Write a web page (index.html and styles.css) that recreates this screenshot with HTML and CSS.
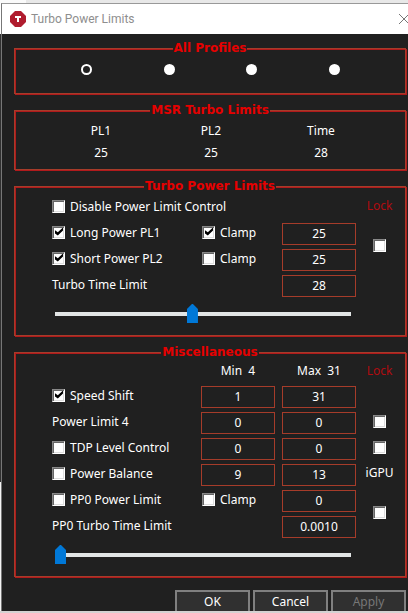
FILE: index.html
```html
<!DOCTYPE html>
<html lang="en">
<head>
<meta charset="utf-8">
<title>Turbo Power Limits</title>
<link rel="stylesheet" href="styles.css">
</head>
<body>
<main class="window">
  <header class="titlebar">
    <svg class="logo" viewBox="0 0 16 16" aria-hidden="true">
      <path d="M5 0h6l5 5v6l-5 5H5l-5-5V5z" fill="#b01c2e"/>
      <path d="M5 5h6v2H9v4H7V7H5z" fill="#fff"/>
    </svg>
    <h1 class="title">Turbo Power Limits</h1>
    <button class="close" type="button" aria-label="Close">
      <svg viewBox="0 0 10 10" width="10" height="10"><path d="M0 0l10 10M10 0L0 10" stroke="#777" fill="none"/></svg>
    </button>
  </header>
  <form class="content">
    <fieldset class="group">
      <legend>All Profiles</legend>
      <div class="profiles">
        <input type="radio" name="profile" aria-label="Profile 1" checked>
        <input type="radio" name="profile" aria-label="Profile 2">
        <input type="radio" name="profile" aria-label="Profile 3">
        <input type="radio" name="profile" aria-label="Profile 4">
      </div>
    </fieldset>

    <fieldset class="group">
      <legend>MSR Turbo Limits</legend>
      <table class="limits">
        <tr><th>PL1</th><th>PL2</th><th>Time</th></tr>
        <tr><td>25</td><td>25</td><td>28</td></tr>
      </table>
    </fieldset>

    <fieldset class="group">
      <legend>Turbo Power Limits</legend>
      <div class="grid">
        <label class="check wide"><input type="checkbox">Disable Power Limit Control</label>
        <span class="lock">Lock</span>
        <label class="check"><input type="checkbox" checked>Long Power PL1</label>
        <label class="check"><input type="checkbox" checked>Clamp</label>
        <input class="field" type="text" value="25" aria-label="Long Power PL1">
        <input class="lock-box tall" type="checkbox" aria-label="Lock turbo power limits">
        <label class="check"><input type="checkbox" checked>Short Power PL2</label>
        <label class="check"><input type="checkbox">Clamp</label>
        <input class="field" type="text" value="25" aria-label="Short Power PL2">
        <label class="text wide-2" for="time">Turbo Time Limit</label>
        <input class="field" id="time" type="text" value="28">
      </div>
      <input class="slider" type="range" min="0" max="1000" value="463" aria-label="Turbo Time Limit">
    </fieldset>

    <fieldset class="group">
      <legend>Miscellaneous</legend>
      <div class="grid with-head">
        <span class="head min">Min&nbsp; 4</span>
        <span class="head">Max&nbsp; 31</span>
        <span class="lock">Lock</span>
        <label class="check"><input type="checkbox" checked>Speed Shift</label>
        <input class="field" type="text" value="1" aria-label="Speed Shift minimum">
        <input class="field" type="text" value="31" aria-label="Speed Shift maximum">
        <span></span>
        <span class="text">Power Limit 4</span>
        <input class="field" type="text" value="0" aria-label="Power Limit 4 minimum">
        <input class="field" type="text" value="0" aria-label="Power Limit 4 maximum">
        <input class="lock-box" type="checkbox" aria-label="Lock Power Limit 4">
        <label class="check"><input type="checkbox">TDP Level Control</label>
        <input class="field" type="text" value="0" aria-label="TDP level minimum">
        <input class="field" type="text" value="0" aria-label="TDP level maximum">
        <input class="lock-box" type="checkbox" aria-label="Lock TDP Level Control">
        <label class="check"><input type="checkbox">Power Balance</label>
        <input class="field" type="text" value="9" aria-label="Power Balance CPU">
        <input class="field" type="text" value="13" aria-label="Power Balance iGPU">
        <span class="head">iGPU</span>
        <label class="check"><input type="checkbox">PP0 Power Limit</label>
        <label class="check"><input type="checkbox">Clamp</label>
        <input class="field" type="text" value="0" aria-label="PP0 Power Limit">
        <input class="lock-box tall" type="checkbox" aria-label="Lock PP0 power limit">
        <label class="text wide-2" for="pp0-time">PP0 Turbo Time Limit</label>
        <input class="field" id="pp0-time" type="text" value="0.0010">
      </div>
      <input class="slider" type="range" min="0" max="1000" value="0" aria-label="PP0 Turbo Time Limit">
    </fieldset>

    <footer class="actions">
      <button type="button">OK</button>
      <button type="button">Cancel</button>
      <button type="button" disabled>Apply</button>
    </footer>
  </form>
</main>
</body>
</html>
```
FILE: styles.css
```css
* { box-sizing: border-box; }

body {
  margin: 0;
  padding: 3px 0 0 1px;
  min-height: 100vh;
  overflow: hidden;
  font: 12px/16px "Noto Sans", "Open Sans", sans-serif;
  color: #fff;
  background:
    linear-gradient(90deg, #fafafa 26px, #e8e8e8 26px) top / 100% 3px no-repeat,
    linear-gradient(#fff 34px, #303030 34px, #303030 482px, #f4f4f4 482px, #f4f4f4 611px, #d4d2d2 611px);
}

.window {
  border-top: 1px solid #999;
  border-left: 1px solid #777;
  background: #202020;
}

.titlebar {
  display: flex;
  align-items: center;
  height: 30px;
  padding-left: 8px;
  background: #fff;
  overflow: hidden;
}
.logo { width: 16px; height: 16px; }
.title {
  flex: 1;
  margin: 0 0 0 5px;
  font-family: Roboto, sans-serif;
  font-size: 12px;
  font-weight: 400;
  color: #8e8e8e;
}
.close {
  flex: none;
  display: flex;
  width: 10px;
  margin-right: -1px;
  padding: 0;
  border: 0;
  background: none;
}

.content {
  display: flex;
  flex-direction: column;
  gap: 9px;
  padding: 7px 2px 0 12px;
}

.group {
  min-width: 0;
  margin: 0;
  padding: 0;
  border: 1px solid #a63c2a;
  box-shadow: 1px 1px 0 #b01a1c, inset 1px 1px 0 #b01a1c;
}
.group legend {
  height: 14px;
  margin: 0 auto;
  padding: 0 1px;
  font: bold 12px/14px "DejaVu Sans", sans-serif;
  color: #e60000;
  background: #202020;
}

.profiles {
  display: grid;
  grid-template-columns: repeat(4, 1fr);
  justify-items: center;
  padding: 9px 29px 18px 30px;
}
.profiles input {
  appearance: none;
  width: 11px;
  height: 11px;
  margin: 0;
  border-radius: 50%;
  background: #fff;
}
.profiles input:checked { border: 2px solid #fff; background: #202020; }

.limits {
  width: calc(100% - 60px);
  margin: 3px 29px 5px 31px;
  table-layout: fixed;
  border-collapse: collapse;
  text-align: center;
}
.limits th, .limits td { height: 22px; padding: 0; font-weight: 400; }

.grid {
  display: grid;
  grid-template-columns: 1fr 74px 7px 74px 47px;
  grid-auto-rows: 26px;
  align-items: center;
  padding: 0 2px 0 37px;
}
.with-head { grid-template-rows: 23px; }
.check { grid-column: 1; display: flex; align-items: center; gap: 5px; white-space: nowrap; }
.check, .text { padding-top: 2px; }
.check + .check { grid-column: 2; padding-left: 1px; }
.wide { grid-column: 1 / 5; }
.text { grid-column: 1; }
.wide-2 { grid-column: 1 / 3; }
.head { text-align: center; white-space: nowrap; }
.min { grid-column: 2; }
.min + .head { grid-column: 4; }
.lock { grid-column: 5; text-align: center; color: #b00c10; }

.field {
  grid-column: 4;
  align-self: end;
  width: 100%;
  height: 22px;
  padding: 0 0 2px;
  border: 1px solid #a63c2a;
  background: #202020;
  color: #fff;
  font: inherit;
  text-align: center;
}
.field:has(+ .field) { grid-column: 2; }

.grid input[type="checkbox"] {
  appearance: none;
  flex: none;
  width: 13px;
  height: 13px;
  margin: 0;
  border: 1px solid;
  border-color: #888 #fff #fff #888;
  box-shadow: inset 1px 1px 0 #666, inset -1px -1px 0 #ddd;
  background: #fff;
}
.grid .check input[type="checkbox"] { margin-bottom: 2px; }
.grid input[type="checkbox"]:checked::before {
  content: "";
  display: block;
  width: 8px;
  height: 8px;
  margin: 1px 0 0 2px;
  background: #000;
  clip-path: polygon(0 35%, 35% 58%, 100% 0, 100% 38%, 35% 100%, 0 75%);
}
.grid .lock-box { grid-column: 5; justify-self: center; }
.grid .tall { grid-row: span 2; }

.slider {
  appearance: none;
  display: block;
  width: calc(100% - 94px);
  height: 19px;
  margin: 7px 54px 12px 40px;
  background: linear-gradient(#e2e5e5, #e2e5e5) center / 100% 4px no-repeat;
}
.slider::-webkit-slider-thumb {
  appearance: none;
  width: 11px;
  height: 19px;
  background: #0078d7;
  clip-path: polygon(0 5px, 5px 0, 6px 0, 100% 5px, 100% 100%, 0 100%);
}

.actions {
  display: flex;
  justify-content: flex-end;
  gap: 3px;
  height: 21px;
  margin-top: 4px;
  overflow: hidden;
}
.actions button {
  width: 75px;
  height: 24px;
  padding: 0;
  border: 2px solid #808080;
  background: #303030;
  color: #fff;
  font: inherit;
}
.actions button:disabled { color: #777; }
```
